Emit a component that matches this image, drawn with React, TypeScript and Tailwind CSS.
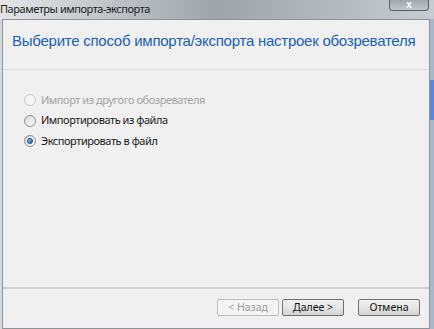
import React from 'react';

const font = { fontFamily: '"Noto Sans", "DejaVu Sans", sans-serif' };
const arial = { fontFamily: '"Liberation Sans", Arial, sans-serif' };

const Radio = ({ label, checked, disabled }: { label: string; checked?: boolean; disabled?: boolean }) => (
  <div className="flex items-center h-[20px]">
    <span
      className={`relative w-[12px] h-[12px] rounded-full border flex items-center justify-center ${
        disabled ? 'border-[#c8c8c8] bg-[#f4f4f4]' : 'border-[#8c8f94] bg-gradient-to-br from-[#d8d8d8] to-[#fbfbfb]'
      }`}
    >
      {checked && <span className="w-[6px] h-[6px] rounded-full bg-gradient-to-br from-[#9fd1ff] to-[#1a5ba8] border border-[#154b8a]" />}
    </span>
    <span className={`ml-[5px] text-[11px] tracking-[-0.45px] ${disabled ? 'text-[#a3a3a3]' : 'text-[#1a1a1a]'}`}>{label}</span>
  </div>
);

const Button = ({ label, disabled }: { label: string; disabled?: boolean }) => (
  <div
    className={`w-[62px] h-[17px] rounded-[2px] border flex items-center justify-center text-[10.5px] ${
      disabled
        ? 'border-[#bdbdbd] bg-[#f4f4f4] text-[#9a9a9a]'
        : 'border-[#707070] bg-gradient-to-b from-[#f2f2f2] via-[#e6e6e6] to-[#d4d4d4] text-[#111]'
    }`}
  >
    {label}
  </div>
);

export default function App() {
  return (
    <div
      className="relative w-[434px] h-[329px] overflow-hidden bg-gradient-to-r from-[#d4dadd] via-[#b9c0c5] to-[#a9b8c8]"
      style={font}
    >
      <div className="h-[19px] flex items-start pt-[2px] bg-gradient-to-r from-[#e4e6e8] via-[#9ea4aa] to-[#c6ccd2]">
        <span className="text-[11px] leading-[13px] text-[#1c1c1c] tracking-[-0.45px]">Параметры импорта-экспорта</span>
      </div>
      <div className="absolute top-0 left-[389px] w-[40px] h-[11px] rounded-b-[4px] border border-t-0 border-[#5a6066] bg-gradient-to-b from-[#a0a6ac] to-[#c2c7cc] flex items-center justify-center">
        <span className="text-white text-[10px] leading-[10px] font-bold" style={arial}>x</span>
      </div>
      <div className="absolute right-0 top-[80px] w-[4px] h-[40px] bg-[#5d86d8]" />
      <div className="ml-[2px] mr-[4px] h-[310px] border border-[#8e9196] bg-[#f0f0f0] flex flex-col">
        <div className="h-[50px] border-b border-[#dcdcdc] pl-[9px] pt-[8px]">
          <span className="whitespace-nowrap text-[15px] tracking-[-0.25px] text-[#1e5fb4]" style={arial}>
            Выберите способ импорта/экспорта настроек обозревателя
          </span>
        </div>
        <div className="flex-1 pl-[21px] pt-[20px] flex flex-col gap-[0.5px]">
          <Radio label="Импорт из другого обозревателя" disabled />
          <Radio label="Импортировать из файла" />
          <Radio label="Экспортировать в файл" checked />
        </div>
        <div className="h-[41px] border-t-2 border-[#d0d0d0] flex items-start justify-end gap-[3px] pt-[10px] pr-[9px]">
          <Button label="< Назад" disabled />
          <Button label="Далее >" />
          <div className="w-[8px]" />
          <Button label="Отмена" />
        </div>
      </div>
    </div>
  );
}
